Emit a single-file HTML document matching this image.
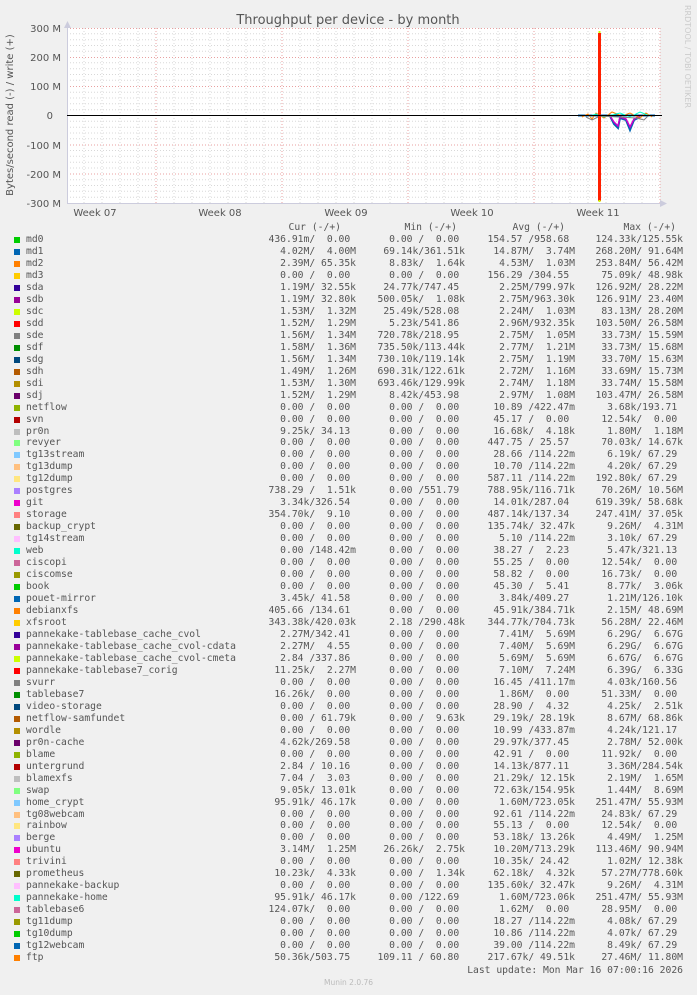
<!DOCTYPE html>
<html><head><meta charset="utf-8"><style>
html,body{margin:0;padding:0;background:#f0f0f0;width:697px;height:995px;overflow:hidden;position:relative}
svg{position:absolute;left:0;top:0}
#leg{position:absolute;left:0;top:234px;width:697px;font-family:"DejaVu Sans Mono","Liberation Mono",monospace;font-size:9.7px;color:#555}
.r{position:relative;height:11.98px;line-height:12px;white-space:nowrap}
.r i{position:absolute;left:14px;top:3px;width:6px;height:6px}
.r b{position:absolute;left:26px;font-weight:normal;white-space:pre}
.r span{position:absolute;white-space:pre}
.a{right:341px}.m{right:232px}.v{right:122px}.x{right:14px}
.h{position:absolute;font-family:"DejaVu Sans Mono","Liberation Mono",monospace;font-size:9.7px;color:#555;white-space:pre;line-height:12px}
</style></head><body>
<svg width="697" height="260" xmlns="http://www.w3.org/2000/svg" font-family="DejaVu Sans, Liberation Sans, sans-serif">
<rect x="67" y="28" width="593" height="175" fill="#fff"/>
<g stroke="#d8d8d8" stroke-width="1" stroke-dasharray="1,2">
<path d="M67 33.8H660M67 39.7H660M67 45.5H660M67 51.3H660M67 62.8H660M67 68.7H660M67 74.5H660M67 80.3H660M67 92.2H660M67 98H660M67 103.8H660M67 109.7H660M67 121.3H660M67 127.2H660M67 133H660M67 138.8H660M67 150.5H660M67 156.3H660M67 162.2H660M67 168H660M67 179.7H660M67 185.5H660M67 191.3H660M67 197.2H660"/>
<path d="M84 28V203M102 28V203M120 28V203M138 28V203M174 28V203M192 28V203M210 28V203M228 28V203M246 28V203M264 28V203M300 28V203M318 28V203M336 28V203M354 28V203M372 28V203M390 28V203M426 28V203M444 28V203M462 28V203M480 28V203M498 28V203M516 28V203M552 28V203M570 28V203M588 28V203M606 28V203M624 28V203M642 28V203"/>
</g>
<g stroke="#e8a0a0" stroke-width="1" stroke-dasharray="1,2">
<path d="M67 28.5H660M67 57.5H660M67 86.5H660M67 145H660M67 174H660"/>
<path d="M156 28V203M282 28V203M408 28V203M534 28V203M660 28V203"/>
</g>
<path d="M67.5 22V203.5H665" stroke="#ccd" fill="none"/>
<path d="M64 28L67.5 21L71 28Z M660 200L667 203.5L660 207Z" fill="#ccd"/>
<path d="M578 115.5H655" stroke="#0066b3" stroke-width="2"/>
<path d="M610 116L614 124L618 128L620 118L626 120L630 130L634 120L640 117" stroke="#0066b3" stroke-width="2" fill="none"/>
<path d="M610 116L614 122L618 126L620 117L626 119L630 127L634 119L640 116" stroke="#cc00cc" stroke-width="1.5" fill="none"/>
<path d="M582 117L588 114L592 119L596 113L604 118L612 112L622 116L630 113L640 118L646 113L652 117" stroke="#ff8000" stroke-width="1" fill="none"/>
<path d="M590 116L596 114L604 117L620 113L630 117L640 112L650 116" stroke="#00ffcc" stroke-width="1" fill="none"/>
<path d="M586 117L592 120L600 116L636 118L644 120L648 116" stroke="#808080" stroke-width="1" fill="none"/>
<rect x="598" y="33" width="3" height="168" fill="#ff2000"/>
<rect x="598.5" y="31" width="2" height="2" fill="#ccff00"/><rect x="598.5" y="200" width="2" height="2" fill="#ccff00"/>
<path d="M67 115.5H662" stroke="#000" stroke-width="1"/>
<g fill="#555" font-size="10" text-anchor="end">
<text x="61" y="32">300 M</text><text x="61" y="61">200 M</text><text x="61" y="90">100 M</text><text x="53" y="119">0</text><text x="61" y="149">-100 M</text><text x="61" y="178">-200 M</text><text x="61" y="207">-300 M</text>
</g>
<g fill="#555" font-size="10" text-anchor="middle">
<text x="95" y="216">Week 07</text><text x="220" y="216">Week 08</text><text x="346" y="216">Week 09</text><text x="472" y="216">Week 10</text><text x="598" y="216">Week 11</text>
</g>
<text x="348" y="24" fill="#555" font-size="13" text-anchor="middle">Throughput per device - by month</text>
<text transform="translate(13,115) rotate(-90)" fill="#555" font-size="10" text-anchor="middle">Bytes/second read (-) / write (+)</text>
<text transform="translate(685,5) rotate(90)" fill="#ccc" font-size="8">RRDTOOL / TOBI OETIKER</text>
</svg>
<div class="h" style="top:222px;right:356px">Cur (-/+)</div>
<div class="h" style="top:222px;right:240px">Min (-/+)</div>
<div class="h" style="top:222px;right:132px">Avg (-/+)</div>
<div class="h" style="top:222px;right:21px">Max (-/+)</div>
<div id="leg">
<div class="r"><i style="background:#00cc00"></i><b>md0</b><span class="a">436.91m/  0.00 </span><span class="m">  0.00 /  0.00 </span><span class="v">154.57 /958.68 </span><span class="x">124.33k/125.55k</span></div>
<div class="r"><i style="background:#0066b3"></i><b>md1</b><span class="a">  4.02M/  4.00M</span><span class="m"> 69.14k/361.51k</span><span class="v"> 14.87M/  3.74M</span><span class="x">268.20M/ 91.64M</span></div>
<div class="r"><i style="background:#ff8000"></i><b>md2</b><span class="a">  2.39M/ 65.35k</span><span class="m">  8.83k/  1.64k</span><span class="v">  4.53M/  1.03M</span><span class="x">253.84M/ 56.42M</span></div>
<div class="r"><i style="background:#ffcc00"></i><b>md3</b><span class="a">  0.00 /  0.00 </span><span class="m">  0.00 /  0.00 </span><span class="v">156.29 /304.55 </span><span class="x"> 75.09k/ 48.98k</span></div>
<div class="r"><i style="background:#330099"></i><b>sda</b><span class="a">  1.19M/ 32.55k</span><span class="m"> 24.77k/747.45 </span><span class="v">  2.25M/799.97k</span><span class="x">126.92M/ 28.22M</span></div>
<div class="r"><i style="background:#990099"></i><b>sdb</b><span class="a">  1.19M/ 32.80k</span><span class="m">500.05k/  1.08k</span><span class="v">  2.75M/963.30k</span><span class="x">126.91M/ 23.40M</span></div>
<div class="r"><i style="background:#ccff00"></i><b>sdc</b><span class="a">  1.53M/  1.32M</span><span class="m"> 25.49k/528.08 </span><span class="v">  2.24M/  1.03M</span><span class="x"> 83.13M/ 28.20M</span></div>
<div class="r"><i style="background:#ff0000"></i><b>sdd</b><span class="a">  1.52M/  1.29M</span><span class="m">  5.23k/541.86 </span><span class="v">  2.96M/932.35k</span><span class="x">103.50M/ 26.58M</span></div>
<div class="r"><i style="background:#808080"></i><b>sde</b><span class="a">  1.56M/  1.34M</span><span class="m">720.78k/218.95 </span><span class="v">  2.75M/  1.05M</span><span class="x"> 33.73M/ 15.59M</span></div>
<div class="r"><i style="background:#008f00"></i><b>sdf</b><span class="a">  1.58M/  1.36M</span><span class="m">735.50k/113.44k</span><span class="v">  2.77M/  1.21M</span><span class="x"> 33.73M/ 15.68M</span></div>
<div class="r"><i style="background:#00487d"></i><b>sdg</b><span class="a">  1.56M/  1.34M</span><span class="m">730.10k/119.14k</span><span class="v">  2.75M/  1.19M</span><span class="x"> 33.70M/ 15.63M</span></div>
<div class="r"><i style="background:#b35a00"></i><b>sdh</b><span class="a">  1.49M/  1.26M</span><span class="m">690.31k/122.61k</span><span class="v">  2.72M/  1.16M</span><span class="x"> 33.69M/ 15.73M</span></div>
<div class="r"><i style="background:#b38f00"></i><b>sdi</b><span class="a">  1.53M/  1.30M</span><span class="m">693.46k/129.99k</span><span class="v">  2.74M/  1.18M</span><span class="x"> 33.74M/ 15.58M</span></div>
<div class="r"><i style="background:#6b006b"></i><b>sdj</b><span class="a">  1.52M/  1.29M</span><span class="m">  8.42k/453.98 </span><span class="v">  2.97M/  1.08M</span><span class="x">103.47M/ 26.58M</span></div>
<div class="r"><i style="background:#8fb300"></i><b>netflow</b><span class="a">  0.00 /  0.00 </span><span class="m">  0.00 /  0.00 </span><span class="v"> 10.89 /422.47m</span><span class="x">  3.68k/193.71 </span></div>
<div class="r"><i style="background:#b30000"></i><b>svn</b><span class="a">  0.00 /  0.00 </span><span class="m">  0.00 /  0.00 </span><span class="v"> 45.17 /  0.00 </span><span class="x"> 12.54k/  0.00 </span></div>
<div class="r"><i style="background:#bebebe"></i><b>pr0n</b><span class="a">  9.25k/ 34.13 </span><span class="m">  0.00 /  0.00 </span><span class="v"> 16.68k/  4.18k</span><span class="x">  1.80M/  1.18M</span></div>
<div class="r"><i style="background:#80ff80"></i><b>revyer</b><span class="a">  0.00 /  0.00 </span><span class="m">  0.00 /  0.00 </span><span class="v">447.75 / 25.57 </span><span class="x"> 70.03k/ 14.67k</span></div>
<div class="r"><i style="background:#80c9ff"></i><b>tg13stream</b><span class="a">  0.00 /  0.00 </span><span class="m">  0.00 /  0.00 </span><span class="v"> 28.66 /114.22m</span><span class="x">  6.19k/ 67.29 </span></div>
<div class="r"><i style="background:#ffc080"></i><b>tg13dump</b><span class="a">  0.00 /  0.00 </span><span class="m">  0.00 /  0.00 </span><span class="v"> 10.70 /114.22m</span><span class="x">  4.20k/ 67.29 </span></div>
<div class="r"><i style="background:#ffe680"></i><b>tg12dump</b><span class="a">  0.00 /  0.00 </span><span class="m">  0.00 /  0.00 </span><span class="v">587.11 /114.22m</span><span class="x">192.80k/ 67.29 </span></div>
<div class="r"><i style="background:#aa80ff"></i><b>postgres</b><span class="a">738.29 /  1.51k</span><span class="m">  0.00 /551.79 </span><span class="v">788.95k/116.71k</span><span class="x"> 70.26M/ 10.56M</span></div>
<div class="r"><i style="background:#ee00cc"></i><b>git</b><span class="a">  3.34k/326.54 </span><span class="m">  0.00 /  0.00 </span><span class="v"> 14.01k/287.04 </span><span class="x">619.39k/ 58.68k</span></div>
<div class="r"><i style="background:#ff8080"></i><b>storage</b><span class="a">354.70k/  9.10 </span><span class="m">  0.00 /  0.00 </span><span class="v">487.14k/137.34 </span><span class="x">247.41M/ 37.05k</span></div>
<div class="r"><i style="background:#666600"></i><b>backup_crypt</b><span class="a">  0.00 /  0.00 </span><span class="m">  0.00 /  0.00 </span><span class="v">135.74k/ 32.47k</span><span class="x">  9.26M/  4.31M</span></div>
<div class="r"><i style="background:#ffbfff"></i><b>tg14stream</b><span class="a">  0.00 /  0.00 </span><span class="m">  0.00 /  0.00 </span><span class="v">  5.10 /114.22m</span><span class="x">  3.10k/ 67.29 </span></div>
<div class="r"><i style="background:#00ffcc"></i><b>web</b><span class="a">  0.00 /148.42m</span><span class="m">  0.00 /  0.00 </span><span class="v"> 38.27 /  2.23 </span><span class="x">  5.47k/321.13 </span></div>
<div class="r"><i style="background:#cc6699"></i><b>ciscopi</b><span class="a">  0.00 /  0.00 </span><span class="m">  0.00 /  0.00 </span><span class="v"> 55.25 /  0.00 </span><span class="x"> 12.54k/  0.00 </span></div>
<div class="r"><i style="background:#999900"></i><b>ciscomse</b><span class="a">  0.00 /  0.00 </span><span class="m">  0.00 /  0.00 </span><span class="v"> 58.82 /  0.00 </span><span class="x"> 16.73k/  0.00 </span></div>
<div class="r"><i style="background:#00cc00"></i><b>book</b><span class="a">  0.00 /  0.00 </span><span class="m">  0.00 /  0.00 </span><span class="v"> 45.30 /  5.41 </span><span class="x">  8.77k/  3.06k</span></div>
<div class="r"><i style="background:#0066b3"></i><b>pouet-mirror</b><span class="a">  3.45k/ 41.58 </span><span class="m">  0.00 /  0.00 </span><span class="v">  3.84k/409.27 </span><span class="x">  1.21M/126.10k</span></div>
<div class="r"><i style="background:#ff8000"></i><b>debianxfs</b><span class="a">405.66 /134.61 </span><span class="m">  0.00 /  0.00 </span><span class="v"> 45.91k/384.71k</span><span class="x">  2.15M/ 48.69M</span></div>
<div class="r"><i style="background:#ffcc00"></i><b>xfsroot</b><span class="a">343.38k/420.03k</span><span class="m">  2.18 /290.48k</span><span class="v">344.77k/704.73k</span><span class="x"> 56.28M/ 22.46M</span></div>
<div class="r"><i style="background:#330099"></i><b>pannekake-tablebase_cache_cvol</b><span class="a">  2.27M/342.41 </span><span class="m">  0.00 /  0.00 </span><span class="v">  7.41M/  5.69M</span><span class="x">  6.29G/  6.67G</span></div>
<div class="r"><i style="background:#990099"></i><b>pannekake-tablebase_cache_cvol-cdata</b><span class="a">  2.27M/  4.55 </span><span class="m">  0.00 /  0.00 </span><span class="v">  7.40M/  5.69M</span><span class="x">  6.29G/  6.67G</span></div>
<div class="r"><i style="background:#ccff00"></i><b>pannekake-tablebase_cache_cvol-cmeta</b><span class="a">  2.84 /337.86 </span><span class="m">  0.00 /  0.00 </span><span class="v">  5.69M/  5.69M</span><span class="x">  6.67G/  6.67G</span></div>
<div class="r"><i style="background:#ff0000"></i><b>pannekake-tablebase7_corig</b><span class="a"> 11.25k/  2.27M</span><span class="m">  0.00 /  0.00 </span><span class="v">  7.10M/  7.24M</span><span class="x">  6.39G/  6.33G</span></div>
<div class="r"><i style="background:#808080"></i><b>svurr</b><span class="a">  0.00 /  0.00 </span><span class="m">  0.00 /  0.00 </span><span class="v"> 16.45 /411.17m</span><span class="x">  4.03k/160.56 </span></div>
<div class="r"><i style="background:#008f00"></i><b>tablebase7</b><span class="a"> 16.26k/  0.00 </span><span class="m">  0.00 /  0.00 </span><span class="v">  1.86M/  0.00 </span><span class="x"> 51.33M/  0.00 </span></div>
<div class="r"><i style="background:#00487d"></i><b>video-storage</b><span class="a">  0.00 /  0.00 </span><span class="m">  0.00 /  0.00 </span><span class="v"> 28.90 /  4.32 </span><span class="x">  4.25k/  2.51k</span></div>
<div class="r"><i style="background:#b35a00"></i><b>netflow-samfundet</b><span class="a">  0.00 / 61.79k</span><span class="m">  0.00 /  9.63k</span><span class="v"> 29.19k/ 28.19k</span><span class="x">  8.67M/ 68.86k</span></div>
<div class="r"><i style="background:#b38f00"></i><b>wordle</b><span class="a">  0.00 /  0.00 </span><span class="m">  0.00 /  0.00 </span><span class="v"> 10.99 /433.87m</span><span class="x">  4.24k/121.17 </span></div>
<div class="r"><i style="background:#6b006b"></i><b>pr0n-cache</b><span class="a">  4.62k/269.58 </span><span class="m">  0.00 /  0.00 </span><span class="v"> 29.97k/377.45 </span><span class="x">  2.78M/ 52.00k</span></div>
<div class="r"><i style="background:#8fb300"></i><b>blame</b><span class="a">  0.00 /  0.00 </span><span class="m">  0.00 /  0.00 </span><span class="v"> 42.91 /  0.00 </span><span class="x"> 11.92k/  0.00 </span></div>
<div class="r"><i style="background:#b30000"></i><b>untergrund</b><span class="a">  2.84 / 10.16 </span><span class="m">  0.00 /  0.00 </span><span class="v"> 14.13k/877.11 </span><span class="x">  3.36M/284.54k</span></div>
<div class="r"><i style="background:#bebebe"></i><b>blamexfs</b><span class="a">  7.04 /  3.03 </span><span class="m">  0.00 /  0.00 </span><span class="v"> 21.29k/ 12.15k</span><span class="x">  2.19M/  1.65M</span></div>
<div class="r"><i style="background:#80ff80"></i><b>swap</b><span class="a">  9.05k/ 13.01k</span><span class="m">  0.00 /  0.00 </span><span class="v"> 72.63k/154.95k</span><span class="x">  1.44M/  8.69M</span></div>
<div class="r"><i style="background:#80c9ff"></i><b>home_crypt</b><span class="a"> 95.91k/ 46.17k</span><span class="m">  0.00 /  0.00 </span><span class="v">  1.60M/723.05k</span><span class="x">251.47M/ 55.93M</span></div>
<div class="r"><i style="background:#ffc080"></i><b>tg08webcam</b><span class="a">  0.00 /  0.00 </span><span class="m">  0.00 /  0.00 </span><span class="v"> 92.61 /114.22m</span><span class="x"> 24.83k/ 67.29 </span></div>
<div class="r"><i style="background:#ffe680"></i><b>rainbow</b><span class="a">  0.00 /  0.00 </span><span class="m">  0.00 /  0.00 </span><span class="v"> 55.13 /  0.00 </span><span class="x"> 12.54k/  0.00 </span></div>
<div class="r"><i style="background:#aa80ff"></i><b>berge</b><span class="a">  0.00 /  0.00 </span><span class="m">  0.00 /  0.00 </span><span class="v"> 53.18k/ 13.26k</span><span class="x">  4.49M/  1.25M</span></div>
<div class="r"><i style="background:#ee00cc"></i><b>ubuntu</b><span class="a">  3.14M/  1.25M</span><span class="m"> 26.26k/  2.75k</span><span class="v"> 10.20M/713.29k</span><span class="x">113.46M/ 90.94M</span></div>
<div class="r"><i style="background:#ff8080"></i><b>trivini</b><span class="a">  0.00 /  0.00 </span><span class="m">  0.00 /  0.00 </span><span class="v"> 10.35k/ 24.42 </span><span class="x">  1.02M/ 12.38k</span></div>
<div class="r"><i style="background:#666600"></i><b>prometheus</b><span class="a"> 10.23k/  4.33k</span><span class="m">  0.00 /  1.34k</span><span class="v"> 62.18k/  4.32k</span><span class="x"> 57.27M/778.60k</span></div>
<div class="r"><i style="background:#ffbfff"></i><b>pannekake-backup</b><span class="a">  0.00 /  0.00 </span><span class="m">  0.00 /  0.00 </span><span class="v">135.60k/ 32.47k</span><span class="x">  9.26M/  4.31M</span></div>
<div class="r"><i style="background:#00ffcc"></i><b>pannekake-home</b><span class="a"> 95.91k/ 46.17k</span><span class="m">  0.00 /122.69 </span><span class="v">  1.60M/723.06k</span><span class="x">251.47M/ 55.93M</span></div>
<div class="r"><i style="background:#cc6699"></i><b>tablebase6</b><span class="a">124.07k/  0.00 </span><span class="m">  0.00 /  0.00 </span><span class="v">  1.62M/  0.00 </span><span class="x"> 28.95M/  0.00 </span></div>
<div class="r"><i style="background:#999900"></i><b>tg11dump</b><span class="a">  0.00 /  0.00 </span><span class="m">  0.00 /  0.00 </span><span class="v"> 18.27 /114.22m</span><span class="x">  4.08k/ 67.29 </span></div>
<div class="r"><i style="background:#00cc00"></i><b>tg10dump</b><span class="a">  0.00 /  0.00 </span><span class="m">  0.00 /  0.00 </span><span class="v"> 10.86 /114.22m</span><span class="x">  4.07k/ 67.29 </span></div>
<div class="r"><i style="background:#0066b3"></i><b>tg12webcam</b><span class="a">  0.00 /  0.00 </span><span class="m">  0.00 /  0.00 </span><span class="v"> 39.00 /114.22m</span><span class="x">  8.49k/ 67.29 </span></div>
<div class="r"><i style="background:#ff8000"></i><b>ftp</b><span class="a"> 50.36k/503.75 </span><span class="m">109.11 / 60.80 </span><span class="v">217.67k/ 49.51k</span><span class="x"> 27.46M/ 11.80M</span></div>
</div>
<div class="h" style="top:965px;right:14px">Last update: Mon Mar 16 07:00:16 2026</div>
<div style="position:absolute;top:978px;left:0;width:697px;text-align:center;font-family:'DejaVu Sans','Liberation Sans',sans-serif;font-size:7.5px;color:#bbb">Munin 2.0.76</div>
</body></html>
